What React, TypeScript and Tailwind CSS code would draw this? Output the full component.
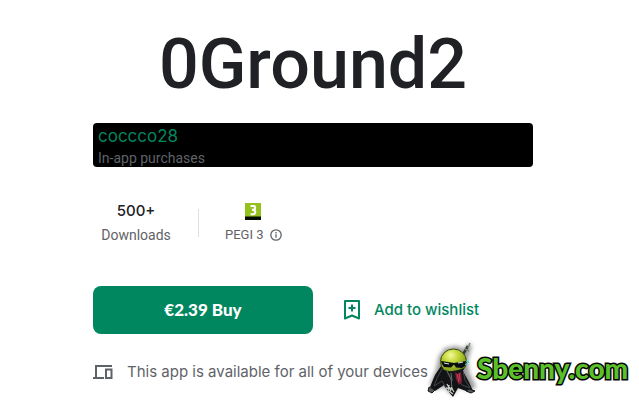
function BookmarkAddIcon() {
  return (
    <svg viewBox="0 0 16 20" className="h-5 w-4 shrink-0" fill="none" stroke="#01875f" strokeWidth="2" strokeLinejoin="round" aria-hidden="true">
      <path d="M1 1h14v17.5l-7-3-7 3z" />
      <path d="M8 4.5v7M4.5 8h7" />
    </svg>
  );
}

function DevicesIcon() {
  return (
    <svg viewBox="0 0 20 16" className="h-4 w-5 shrink-0" fill="none" stroke="#5f6368" strokeWidth="2" aria-hidden="true">
      <path d="M19 2H3v11M0 14h11" />
      <path d="M13 5.5h5.500v8.500H13z" />
    </svg>
  );
}

function InfoIcon() {
  return (
    <svg viewBox="0 0 12 12" className="size-3" fill="none" stroke="#5f6368" strokeWidth="1.3" aria-hidden="true">
      <circle cx="6" cy="6" r="5.2" />
      <path d="M6 5.300v3.500M6 3.100v1.300" />
    </svg>
  );
}

function PegiIcon() {
  return (
    <svg viewBox="0 0 16 17" className="h-[17px] w-4" role="img" aria-label="PEGI 3">
      <path d="M0 0h16v14H0z" fill="#95c11f" />
      <path d="M0 13.500h16V17H0z" fill="#050a02" />
      <path d="M5.500 3h3.200q1.500 0 1.500 1.800T8.300 6.900H7h1.300q2 0 2 2.100T8.500 11.200h-3" fill="none" stroke="#fff" strokeWidth="2.100" />
    </svg>
  );
}

function NinjaLogo() {
  return (
    <svg viewBox="0 0 52 58" className="h-[58px] w-[52px] shrink-0 overflow-visible" aria-hidden="true">
      <defs>
        <radialGradient id="head" cx=".4" cy=".25" r=".8">
          <stop offset="0" stopColor="#f4f99a" />
          <stop offset=".35" stopColor="#c3d83a" />
          <stop offset="1" stopColor="#64850f" />
        </radialGradient>
        <filter id="halo" x="-30%" y="-30%" width="160%" height="160%">
          <feGaussianBlur stdDeviation="2" />
        </filter>
      </defs>
      <path d="M12 14l6-8 12-2 7 3 4-5 4 1-4 15 1 12 7 15-6 4-11-4-7 8-8-8-10 3-4-6 6-14z" fill="#555" opacity=".6" filter="url(#halo)" />
      <path d="M35 14l6-10" stroke="#343b37" strokeWidth="2.500" />
      <path d="M41 6l2-5M38 7l4 2" stroke="#7d8a74" strokeWidth="1.500" />
      <path d="M14 24L8 33l-5 12 5 4 9-6 4 6 5 6 5-9 8 3 7 0-4-9-5-9-4-8z" fill="#111315" />
      <path d="M15 27l-5 9-3 8 8-5 4 7M36 29l2 9 5 8-8-3-4-6" fill="none" stroke="#42464a" strokeWidth="1" />
      <ellipse cx="26.500" cy="19.500" rx="13" ry="12.500" fill="url(#head)" stroke="#39480e" />
      <path d="M17 28q9 3 20-2l-3 8-7 5-7-4z" fill="#151819" />
      <path d="M14 19l10 1.500 3 .5 12-2-1 5-3 2-6-.5-2-3-3 3-7-.5-2-3z" fill="#080d0f" />
      <path d="M17 21l5 1M31 21l5-1" stroke="#dce9e1" />
      <path d="M39 19l3 1-4 3" stroke="#3fd0df" fill="none" />
      <path d="M28 30l3 2 3-2 1 10-3 3-3-6z" fill="#841d36" />
      <path d="M30 32l2 8M32 31l1 7" stroke="#cf4964" strokeWidth=".8" />
      <path d="M20 29l4 8 1 9M24 31l1 8" fill="none" stroke="#69706b" />
      <path d="M20 42l4 7m-5-3l7 1m-4-4l-1 7m3-5l3 5m-5-1l4 3" stroke="#c6cec4" strokeWidth="1.300" />
      <path d="M2 45l6 3-3 3-4-2zM42 47l6 2-4 2-5-2z" fill="#555b59" stroke="#151515" />
    </svg>
  );
}

export default function App() {
  return (
    <div className="relative bg-white px-[93px] pt-8 pb-5 font-['Roboto',sans-serif] text-[#5f6368]">
      <main className="max-w-[440px]">
        <h1 className="text-center text-[70px] leading-16 font-medium text-[#202124]">0Ground2</h1>

        <section className="mt-[27px] h-11 rounded bg-black px-[5px] pt-[3px]">
          <a href="#developer" className="block font-['Inter',sans-serif] text-[17px] leading-5 text-[#01875f]">
            coccco28
          </a>
          <p className="mt-1 text-sm leading-4">In-app purchases</p>
        </section>

        <section className="mt-9 flex items-center">
          <div className="w-[86px] text-center">
            <div className="font-['Inter',sans-serif] text-[15px] leading-4 font-medium text-[#202124]">500+</div>
            <div className="mt-2 text-sm leading-4">Downloads</div>
          </div>
          <div className="ml-[19px] h-7 w-px bg-[#e0e0e0]" />
          <div className="ml-[26px] flex flex-col items-center">
            <PegiIcon />
            <div className="mt-[7px] flex items-center gap-[6px] text-[13px] leading-4">
              PEGI 3
              <button type="button" aria-label="More info on this rating">
                <InfoIcon />
              </button>
            </div>
          </div>
        </section>

        <section className="mt-[43px] flex items-center">
          <button type="button" className="h-12 w-1/2 rounded-lg bg-[#01875f] font-['Lato',sans-serif] text-[17px] font-black text-white">
            €2.39 Buy
          </button>
          <button type="button" className="ml-[31px] flex items-center gap-[14px] font-['Inter',sans-serif] text-[15px] font-medium whitespace-nowrap text-[#01875f]">
            <BookmarkAddIcon />
            Add to wishlist
          </button>
        </section>

        <p className="mt-7 flex items-center gap-[14px] font-['Inter',sans-serif] text-[15px] leading-5 whitespace-nowrap">
          <DevicesIcon />
          This app is available for all of your devices
        </p>
      </main>

      <div className="absolute top-[342px] left-[427px] flex items-start">
        <NinjaLogo />
        <span className="-ml-[2px] pt-[10px] font-['Lato',sans-serif] text-[28px] leading-8 font-black text-[#5abf28] [-webkit-text-stroke:3px_#050505] [paint-order:stroke_fill]">
          Sbenny.com
        </span>
      </div>
    </div>
  );
}
